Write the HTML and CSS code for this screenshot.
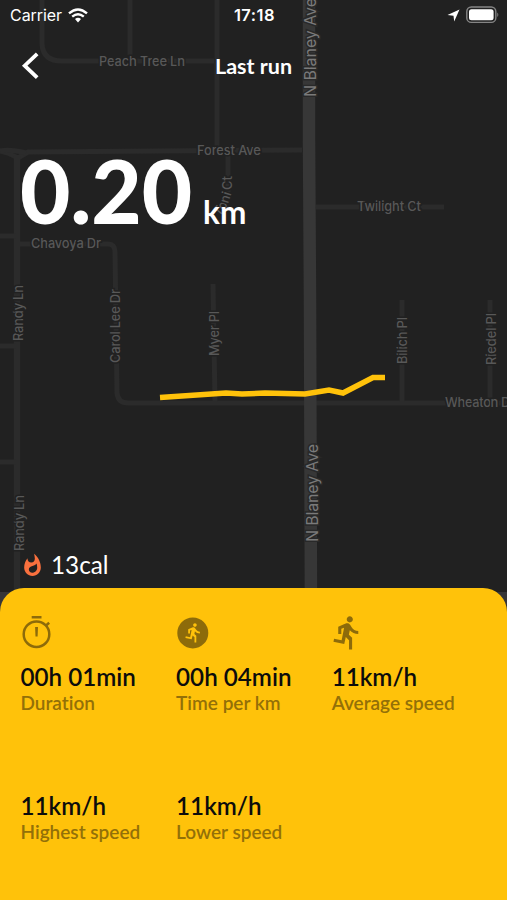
FILE: index.html
```html
<!DOCTYPE html>
<html lang="en">
<head>
<meta charset="utf-8">
<meta name="viewport" content="width=device-width, initial-scale=1">
<title>Last run</title>
<link rel="stylesheet" href="styles.css">
</head>
<body>
<main class="screen">
  <svg class="map" width="507" height="620" viewBox="0 0 507 620" aria-hidden="true">
    <g class="roads">
      <path d="M42 0V44Q43 61 62 61H214"/>
      <path d="M130 0V55M217 0V150M0 151L8 153L18 158L28 152L302 150M228 152V192"/>
      <path d="M0 151Q10 149 26 153"/>
      <path d="M17 156V620" class="road-wide"/>
      <path d="M0 236H16M0 346H16M0 462H16"/>
      <path d="M20 244H108Q115 244 115 252L117 393Q118 403 128 403H507"/>
      <path d="M213 284L215 402M316 207H444M402 300V402M490 300V402"/>
    </g>
    <path class="road-main" d="M309 0V140L310 300L311 620"/>
    <g class="labels">
      <text x="99" y="66" textLength="86">Peach Tree Ln</text>
      <text x="197" y="155" textLength="64">Forest Ave</text>
      <text x="357" y="211" textLength="64">Twilight Ct</text>
      <text x="31" y="248" textLength="70">Chavoya Dr</text>
      <text x="445" y="407" textLength="70">Wheaton Dr</text>
      <text transform="translate(22.5 341) rotate(-90)" textLength="56">Randy Ln</text>
      <text transform="translate(120 363) rotate(-90)" textLength="74">Carol Lee Dr</text>
      <text transform="translate(218.500 356) rotate(-90)" textLength="45">Myer Pl</text>
      <text transform="translate(406.500 364) rotate(-90)" textLength="47">Bilich Pl</text>
      <text transform="translate(495.500 365) rotate(-90)" textLength="52">Riedel Pl</text>
      <text transform="translate(23.500 551) rotate(-90)" textLength="56">Randy Ln</text>
      <text transform="translate(219 217) rotate(-50)">T</text>
      <text transform="translate(224 211) rotate(-58)">o</text>
      <text transform="translate(228 204) rotate(-72)">ni</text>
      <text transform="translate(231.500 190) rotate(-90)">Ct</text>
    </g>
    <g class="labels labels-main">
      <text transform="translate(315.500 97) rotate(-90)" textLength="99">N Blaney Ave</text>
      <text transform="translate(318 542) rotate(-90)" textLength="98">N Blaney Ave</text>
    </g>
    <path class="map-edge" d="M0 592H507V620H0Z"/>
    <path class="route" d="M160 397.500L226 393L242 394L265 393L305 394L329 390L343 393L373 377.500H385"/>
  </svg>

  <header class="status">
    <div class="carrier">
      <span>Carrier</span>
      <svg width="20" height="15" viewBox="0 0 20 15">
        <path d="M1 5.400Q10-2.400 19 5.400" />
        <path d="M4.200 8.700Q10 3.700 15.800 8.700" />
        <path class="fill" d="M7 11Q10 8.300 13 11L10 14.400Z" />
      </svg>
    </div>
    <time class="clock">17:18</time>
    <div class="indicators">
      <svg width="13" height="13" viewBox="0 0 13 13"><path class="fill" d="M12.500.5L7.200 12.500L6.500 6.700L.5 6Z"/></svg>
      <svg width="33" height="18" viewBox="0 0 33 18">
        <rect class="shell" x=".8" y="1" width="29" height="15.400" rx="4.500"/>
        <rect class="fill" x="3" y="3.200" width="24.600" height="11" rx="2.500"/>
        <path class="cap" d="M31.300 6.500Q33.300 8.700 31.300 11Z"/>
      </svg>
    </div>
  </header>

  <nav class="nav">
    <svg class="back" width="20" height="28" viewBox="0 0 20 28"><path d="M17.200 1.800L4.700 13.700L17.200 25.600"/></svg>
    <h1 class="title">Last run</h1>
    <span></span>
  </nav>

  <section class="distance">
    <span class="distance-value">0.20</span>
    <span class="distance-unit">km</span>
  </section>

  <section class="calories">
    <svg width="25" height="25" viewBox="0 0 24 24"><path d="M13.500.67s.74 2.650.74 4.800c0 2.060-1.350 3.730-3.410 3.730-2.070 0-3.630-1.670-3.630-3.730l.03-.36C5.210 7.510 4 10.620 4 14c0 4.420 3.580 8 8 8s8-3.580 8-8C20 8.610 17.410 3.800 13.500.67zM11.710 19c-1.780 0-3.220-1.400-3.220-3.140 0-1.620 1.050-2.760 2.810-3.120 1.770-.36 3.600-1.210 4.620-2.580.39 1.290.59 2.650.59 4.040 0 2.650-2.150 4.800-4.800 4.800z"/></svg>
    <span>13cal</span>
  </section>

  <section class="sheet">
    <div class="stat">
      <svg class="icon" width="37" height="37" viewBox="0 0 37 37">
        <circle class="ring" cx="18.500" cy="20.200" r="12.800"/>
        <path d="M13.700 1.900H23.500V4.400H13.700ZM17.100 13H20L19.600 22.500H17.500Z"/>
        <path class="tick" d="M28.300 11.300L31.200 8.800"/>
      </svg>
      <strong>00h 01min</strong><span>Duration</span>
    </div>
    <div class="stat">
      <svg class="icon" width="37" height="37" viewBox="0 0 37 37">
        <circle cx="18.800" cy="18.900" r="15.500"/>
        <path class="cutout" transform="translate(8.800 7.900) scale(.9)" d="M13.490 5.480c1.100 0 2-.9 2-2s-.9-2-2-2-2 .9-2 2 .9 2 2 2zm-3.600 13.900l1-4.400 2.100 2v6h2v-7.500l-2.100-2 .6-3c1.300 1.500 3.300 2.500 5.500 2.500v-2c-1.900 0-3.500-1-4.300-2.400l-1-1.600c-.4-.6-1-1-1.700-1-.3 0-.5.1-.8.1l-5.200 2.200v4.700h2v-3.400l1.800-.7-1.600 8.100-4.900-1-.4 2 7 1.400z"/>
      </svg>
      <strong>00h 04min</strong><span>Time per km</span>
    </div>
    <div class="stat">
      <svg class="icon" width="37" height="37" viewBox="0 0 24 24"><path d="M13.490 5.480c1.100 0 2-.9 2-2s-.9-2-2-2-2 .9-2 2 .9 2 2 2zm-3.600 13.900l1-4.400 2.100 2v6h2v-7.500l-2.100-2 .6-3c1.300 1.500 3.300 2.500 5.500 2.500v-2c-1.900 0-3.500-1-4.300-2.400l-1-1.600c-.4-.6-1-1-1.700-1-.3 0-.5.1-.8.1l-5.200 2.200v4.700h2v-3.400l1.800-.7-1.600 8.100-4.900-1-.4 2 7 1.400z"/></svg>
      <strong>11km/h</strong><span>Average speed</span>
    </div>
    <div class="stat stat-plain"><strong>11km/h</strong><span>Highest speed</span></div>
    <div class="stat stat-plain"><strong>11km/h</strong><span>Lower speed</span></div>
  </section>
</main>
</body>
</html>
```

FILE: styles.css
```css
* { box-sizing: border-box; }

body {
  margin: 0;
  background: #212121;
  color: #fff;
  font-family: Lato, "Liberation Sans", sans-serif;
}

.screen {
  position: relative;
  display: flex;
  flex-direction: column;
  width: 507px;
  height: 900px;
  overflow: hidden;
}

svg { display: block; flex: none; }

.map {
  position: absolute;
  top: 0;
  left: 0;
  z-index: -1;
}

.roads path { fill: none; stroke: #2b2b2b; stroke-width: 5; }
.roads .road-wide { stroke-width: 6.5; }
.road-main { fill: none; stroke: #373737; stroke-width: 12.5; }
.map-edge { fill: #363638; }
.route { fill: none; stroke: #ffc20a; stroke-width: 5.5; }

.labels {
  font: 500 13px Inter, sans-serif;
  fill: #585858;
  stroke: #212121;
  stroke-width: 3px;
  paint-order: stroke;
}

.labels-main { font-size: 16px; font-weight: 400; fill: #7a7a7a; stroke: #292929; }

.status {
  display: grid;
  grid-template-columns: 1fr auto 1fr;
  align-items: center;
  height: 30px;
  padding: 0 8px 0 10px;
  font-family: Inter, sans-serif;
  font-size: 16px;
}

.carrier { display: flex; align-items: center; gap: 6px; letter-spacing: -.05px; }
.carrier path { fill: none; stroke: #fff; stroke-width: 2.4; }
.carrier .fill { fill: #fff; stroke: none; }
.clock { font-size: 16.5px; font-weight: 600; letter-spacing: .5px; }
.indicators { display: flex; justify-content: flex-end; align-items: center; gap: 6px; }
.fill { fill: #fff; }
.shell { fill: none; stroke: #858585; stroke-width: 1.4; }
.cap { fill: #858585; }

.nav {
  display: grid;
  grid-template-columns: 1fr auto 1fr;
  align-items: center;
  height: 72px;
  padding: 0 20px;
}

.back { fill: none; stroke: #fff; stroke-width: 3.8; }
.title { margin: 0; font-size: 21.5px; line-height: 26px; font-weight: 700; }

.distance {
  display: flex;
  align-items: baseline;
  gap: 11px;
  height: 180px;
  padding: 35px 0 0 20px;
}

.distance-value { font-size: 87px; line-height: 107px; font-weight: 900; }
.distance-unit { font-size: 31.5px; font-weight: 700; }

.calories {
  display: flex;
  align-items: center;
  gap: 6px;
  height: 30px;
  margin-top: 268px;
  padding-left: 20px;
  font-size: 24.3px;
  line-height: 30px;
}

.calories path { fill: #f9703e; }

.sheet {
  display: grid;
  grid-template-columns: repeat(3, 155.6px);
  grid-template-rows: 129px 129px;
  height: 312px;
  margin-top: 8px;
  padding: 26px 20px 0 20.5px;
  border-radius: 24px 24px 0 0;
  background: #ffc20a;
}

.stat { display: flex; flex-direction: column; color: #937008; font-variant-ligatures: none; }
.stat-plain { padding-top: 37px; }
.icon { margin-left: -2.5px; fill: #8d6b0a; }
.ring, .tick { fill: none; stroke: #8d6b0a; stroke-width: 2.5; }
.cutout { fill: #ffc20a; }
.stat strong { margin-top: 11px; color: #0c0c0c; font-size: 24.2px; line-height: 30px; font-weight: 600; }
.stat span { margin-top: -1px; font-size: 19px; line-height: 23px; font-weight: 600; }
```
